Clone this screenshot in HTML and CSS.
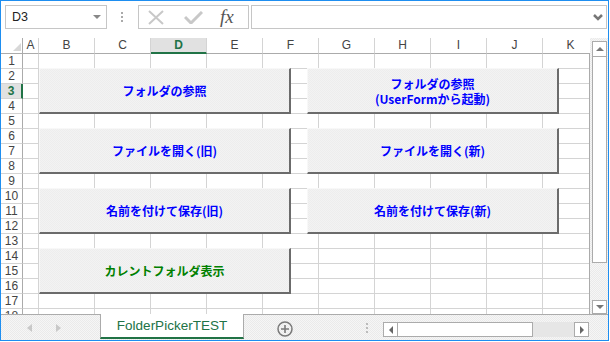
FILE: index.html
```html
<!DOCTYPE html>
<html lang="ja">
<head>
    <meta charset="UTF-8">
    <title>FolderPickerTEST</title>
    <link rel="stylesheet" href="styles.css">
</head>
<body>
    <div class="window">
        <!-- Bearbeitungsleiste -->
        <div class="formula-bar">
            <div class="name-box">
                <span>D3</span>
                <span class="name-arrow"></span>
            </div>
            <div class="fb-sep">
                <svg width="2" height="10" viewBox="0 0 2 10"><rect y="0" width="2" height="2" fill="#aaa"/><rect y="4" width="2" height="2" fill="#aaa"/><rect y="8" width="2" height="2" fill="#aaa"/></svg>
            </div>
            <div class="fb-buttons">
                <svg class="fb-cancel" width="16" height="15" viewBox="0 0 16 15"><path d="M1 1 L15 14 M15 1 L1 14" stroke="#c8c8c8" stroke-width="2" fill="none"/></svg>
                <svg class="fb-enter" width="19" height="13" viewBox="0 0 19 13"><path d="M1 6 L7 12 L18 1" stroke="#c8c8c8" stroke-width="3" fill="none"/></svg>
                <span class="fb-fx">fx</span>
            </div>
            <div class="fb-input">
                <svg width="10" height="7" viewBox="0 0 10 7"><path d="M1 1 L5 5 L9 1" stroke="#777" stroke-width="2.5" fill="none"/></svg>
            </div>
        </div>

        <!-- Tabelle -->
        <div class="sheet">
            <div class="grid">
                <div class="col-head" id="colHead">
                    <div class="corner"><span class="corner-tri"></span></div>
                </div>
                <div class="rows" id="rows"></div>

                <div class="macro-btn col-left r1">フォルダの参照</div>
                <div class="macro-btn col-right r1"><span class="line">フォルダの参照</span><span class="line">(UserFormから起動)</span></div>
                <div class="macro-btn col-left r2">ファイルを開く(旧)</div>
                <div class="macro-btn col-right r2">ファイルを開く(新)</div>
                <div class="macro-btn col-left r3">名前を付けて保存(旧)</div>
                <div class="macro-btn col-right r3">名前を付けて保存(新)</div>
                <div class="macro-btn green col-left r4">カレントフォルダ表示</div>
            </div>
            <div class="gutter">
                <div class="vscroll">
                    <div class="vs-box vs-up"><span class="tri-up"></span></div>
                    <div class="vs-thumb"></div>
                    <div class="vs-track"></div>
                    <div class="vs-box vs-down"><span class="tri-down"></span></div>
                </div>
            </div>
        </div>

        <!-- Blattregister -->
        <div class="tab-bar">
            <div class="tab-nav">
                <span class="nav-left"></span>
                <span class="nav-right"></span>
            </div>
            <div class="sheet-tab">FolderPickerTEST</div>
            <div class="tab-tools">
                <svg class="add-sheet" width="16" height="16" viewBox="0 0 16 16"><circle cx="8" cy="8" r="7" stroke="#7a7a7a" stroke-width="1.5" fill="none"/><path d="M8 4 V12 M4 8 H12" stroke="#7a7a7a" stroke-width="1.6"/></svg>
                <svg class="tab-dots" width="2" height="10" viewBox="0 0 2 10"><rect y="0" width="2" height="2" fill="#bbb"/><rect y="4" width="2" height="2" fill="#bbb"/><rect y="8" width="2" height="2" fill="#bbb"/></svg>
                <div class="hscroll">
                    <div class="hs-box"><span class="tri-left"></span></div>
                    <div class="hs-thumb"></div>
                    <div class="hs-track"></div>
                    <div class="hs-box hs-right"><span class="tri-right"></span></div>
                </div>
            </div>
        </div>
    </div>

    <script>
        // Kopfzeile und Zeilen erzeugen
        const cols = ['A', 'B', 'C', 'D', 'E', 'F', 'G', 'H', 'I', 'J', 'K'];
        const colHead = document.getElementById('colHead');
        const rows = document.getElementById('rows');

        cols.forEach(function(c) {
            const cell = document.createElement('div');
            cell.className = 'ch' + (c === 'A' ? ' narrow' : '') + (c === 'D' ? ' sel' : '');
            cell.textContent = c;
            colHead.appendChild(cell);
        });

        for (let r = 1; r <= 18; r++) {
            const row = document.createElement('div');
            row.className = 'row';
            const rh = document.createElement('div');
            rh.className = 'rh' + (r === 3 ? ' sel' : '');
            rh.textContent = r;
            row.appendChild(rh);
            cols.forEach(function(c) {
                const cell = document.createElement('div');
                cell.className = 'cell' + (c === 'A' ? ' narrow' : '');
                row.appendChild(cell);
            });
            rows.appendChild(row);
        }
    </script>
</body>
</html>
```

FILE: styles.css
```css
/* Excel-Fenster */

* {
    box-sizing: border-box;
}

body {
    margin: 0;
    background: #fff;
    font-family: "Liberation Sans", Arial, sans-serif;
}

.window {
    width: 609px;
    height: 341px;
    border: 1px solid #1e8ef0;
    display: flex;
    flex-direction: column;
    overflow: hidden;
    background: #fff;
}

/* Bearbeitungsleiste */
.formula-bar {
    flex: none;
    height: 37px;
    display: flex;
    align-items: flex-start;
    padding: 4px 0 0 4px;
}

.name-box {
    width: 102px;
    height: 24px;
    border: 1px solid #c6c6c6;
    display: flex;
    align-items: center;
    justify-content: space-between;
    padding: 0 5px 0 6px;
    font-size: 12.5px;
    color: #222;
}

.name-arrow {
    width: 0;
    height: 0;
    border-left: 4px solid transparent;
    border-right: 4px solid transparent;
    border-top: 4px solid #888;
}

.fb-sep {
    width: 31px;
    padding: 7px 0 0 14px;
}

.fb-sep svg {
    display: block;
}

.fb-buttons {
    width: 111px;
    height: 24px;
    border: 1px solid #c6c6c6;
    display: flex;
    align-items: center;
    padding-left: 9px;
}

.fb-enter {
    margin-left: 20px;
}

.fb-fx {
    margin-left: 17px;
    font-family: "Liberation Serif", "Times New Roman", serif;
    font-style: italic;
    font-size: 19px;
    color: #555;
    line-height: 20px;
}

.fb-input {
    width: 356px;
    height: 24px;
    margin-left: 2px;
    border: 1px solid #c6c6c6;
    display: flex;
    align-items: center;
    justify-content: flex-end;
    padding-right: 3px;
}

/* Tabelle */
.sheet {
    flex: none;
    height: 276px;
    display: flex;
}

.grid {
    width: 589px;
    position: relative;
    overflow: hidden;
}

.col-head {
    width: 589px;
    height: 16px;
    display: flex;
    overflow: hidden;
}

.corner {
    flex: none;
    width: 22px;
    height: 16px;
    border-right: 1px solid #ababab;
    border-bottom: 1px solid #ababab;
    display: flex;
    align-items: flex-end;
    justify-content: flex-end;
    padding: 0 1px 2px 0;
}

.corner-tri {
    width: 0;
    height: 0;
    border-left: 8px solid transparent;
    border-bottom: 8px solid #d8d8d8;
}

.ch {
    flex: none;
    width: 56px;
    height: 16px;
    border-right: 1px solid #d4d4d4;
    border-bottom: 1px solid #ababab;
    text-align: center;
    font-size: 12px;
    line-height: 15px;
    color: #444;
}

.ch.sel {
    background: #e1e1e1;
    color: #217346;
    font-weight: bold;
    border-bottom: 2px solid #217346;
}

.narrow {
    width: 16px;
}

.rows {
    width: 589px;
    height: 260px;
    overflow: hidden;
    border-right: 1px solid #ababab;
}

.row {
    display: flex;
    height: 15px;
}

.rh {
    flex: none;
    width: 22px;
    border-right: 1px solid #ababab;
    border-bottom: 1px solid #d4d4d4;
    text-align: center;
    font-size: 12px;
    line-height: 14px;
    color: #444;
}

.rh.sel {
    background: #e1e1e1;
    color: #217346;
    font-weight: bold;
    border-right: 2px solid #217346;
}

.cell {
    flex: none;
    width: 56px;
    border-right: 1px solid #d4d4d4;
    border-bottom: 1px solid #d4d4d4;
}

.cell.narrow {
    width: 16px;
}

/* Makro-Schaltflaechen */
.macro-btn {
    position: absolute;
    width: 252px;
    height: 46px;
    border-style: solid;
    border-width: 1px 2px 2px 1px;
    border-color: #f8f8f8 #6b6b6b #6b6b6b #f8f8f8;
    background: #f0f0f0 repeating-conic-gradient(#ededed 0 25%, #f3f3f3 0 50%) 0 0 / 2px 2px;
    display: flex;
    flex-direction: column;
    align-items: center;
    justify-content: center;
    text-align: center;
    font-family: "Noto Sans CJK JP", sans-serif;
    font-weight: bold;
    font-size: 12px;
    line-height: 15px;
    color: #0000ff;
}

.macro-btn .line {
    display: block;
    height: 15px;
}

.macro-btn.green {
    color: #008000;
}

.col-left { left: 38px; }
.col-right { left: 306px; }
.r1 { top: 30px; }
.r2 { top: 90px; }
.r3 { top: 150px; }
.r4 { top: 210px; }

/* Bildlaufleisten */
.gutter {
    width: 18px;
    padding: 3px 0 0 2px;
    background: #f0f0f0 repeating-conic-gradient(#eaeaea 0 25%, #f6f6f6 0 50%) 0 0 / 2px 2px;
}

.vscroll {
    width: 15px;
    height: 273px;
    display: flex;
    flex-direction: column;
}

.vs-box {
    height: 16px;
    border: 1px solid #ababab;
    background: #fff;
    display: flex;
    align-items: center;
    justify-content: center;
}

.vs-down {
    height: 14px;
}

.vs-thumb {
    height: 206px;
    border: 1px solid #ababab;
    border-top: none;
    background: #fff;
}

.vs-track {
    flex: 1;
}

.tri-up, .tri-down {
    width: 0;
    height: 0;
    border-left: 4px solid transparent;
    border-right: 4px solid transparent;
}

.tri-up {
    border-bottom: 4px solid #777;
}

.tri-down {
    border-top: 4px solid #777;
}

/* Blattregister */
.tab-bar {
    flex: 1;
    display: flex;
    background: #f0f0f0 repeating-conic-gradient(#eaeaea 0 25%, #f6f6f6 0 50%) 0 0 / 2px 2px;
}

.tab-nav {
    width: 99px;
    border-top: 1px solid #ababab;
    display: flex;
    align-items: flex-start;
    padding: 9px 0 0 26px;
}

.nav-left, .nav-right {
    width: 0;
    height: 0;
    border-top: 4px solid transparent;
    border-bottom: 4px solid transparent;
}

.nav-left {
    border-right: 5px solid #c8c8c8;
}

.nav-right {
    margin-left: 24px;
    border-left: 5px solid #c8c8c8;
}

.sheet-tab {
    width: 144px;
    height: 25px;
    background: #fff;
    border-left: 1px solid #ababab;
    border-right: 1px solid #ababab;
    border-bottom: 2px solid #217346;
    text-align: center;
    font-size: 13.5px;
    line-height: 23px;
    color: #217346;
}

.tab-tools {
    flex: 1;
    border-top: 1px solid #ababab;
    display: flex;
    align-items: flex-start;
}

.add-sheet {
    margin: 6px 0 0 33px;
}

.tab-dots {
    margin: 8px 0 0 73px;
}

.hscroll {
    width: 206px;
    height: 15px;
    margin: 7px 0 0 15px;
    display: flex;
}

.hs-box {
    width: 15px;
    border: 1px solid #ababab;
    background: #fff;
    display: flex;
    align-items: center;
    justify-content: center;
}

.hs-thumb {
    width: 135px;
    border: 1px solid #ababab;
    border-left: none;
    background: #fff;
}

.hs-track {
    flex: 1;
    background: #e6e6e6;
}

.tri-left, .tri-right {
    width: 0;
    height: 0;
    border-top: 4px solid transparent;
    border-bottom: 4px solid transparent;
}

.tri-left {
    border-right: 4px solid #666;
}

.tri-right {
    border-left: 4px solid #666;
}
```
